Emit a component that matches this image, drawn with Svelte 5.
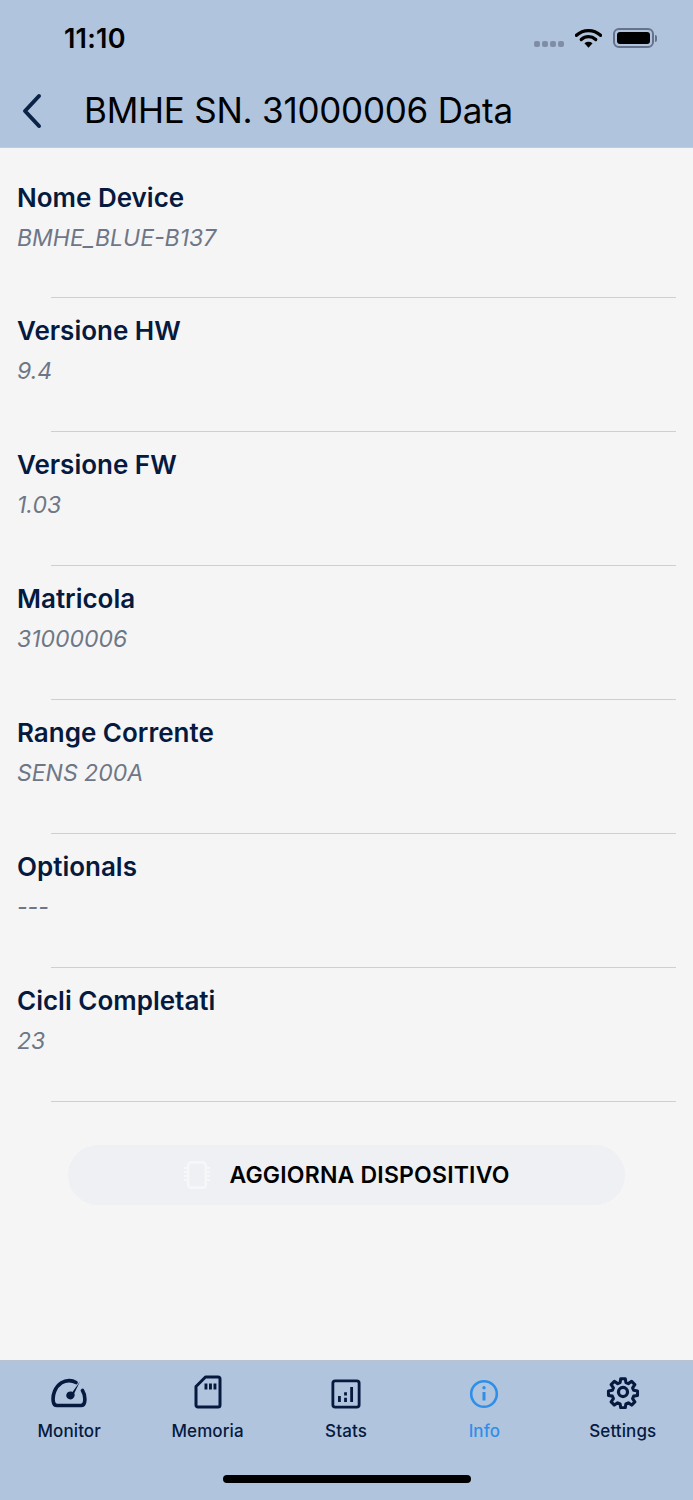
<script>
  const rows = [
    ['Nome Device', 'BMHE_BLUE-B137'],
    ['Versione HW', '9.4'],
    ['Versione FW', '1.03'],
    ['Matricola', '31000006'],
    ['Range Corrente', 'SENS 200A'],
    ['Optionals', '---'],
    ['Cicli Completati', '23']
  ];
</script>

<div class="page">
  <header>
    <div class="status">
      <span class="time">11:10</span>
      <div class="status-icons">
        <div class="dots"><i></i><i></i><i></i><i></i></div>
        <svg class="wifi" width="27" height="20" viewBox="0 0 28 20">
          <path d="M1.500 7.200C8.600 .6 19.400 .6 26.500 7.200" fill="none" stroke="#000" stroke-width="3.400" stroke-linecap="round"/>
          <path d="M6.500 11.600C10.900 7.700 17.100 7.700 21.500 11.600" fill="none" stroke="#000" stroke-width="3.400" stroke-linecap="round"/>
          <path d="M9.800 15.400C12.400 13.400 15.600 13.400 18.200 15.400L14 20Z" fill="#000"/>
        </svg>
        <div class="battery"><div class="fill"></div></div>
        <div class="nub"></div>
      </div>
    </div>
    <div class="nav">
      <svg class="back" width="24" height="36" viewBox="0 0 24 36">
        <path d="M19 3L5 18L19 33" fill="none" stroke="#0b2347" stroke-width="4" stroke-linecap="round" stroke-linejoin="round"/>
      </svg>
      <h1>BMHE SN. 31000006 Data</h1>
    </div>
  </header>

  <main>
    {#each rows as [label, value]}
      <section class="row">
        <div class="label">{label}</div>
        <div class="value">{value}</div>
      </section>
    {/each}
    <div class="action">
      <button>
        <svg width="28" height="30" viewBox="0 0 28 30" fill="none" stroke="#f6f7f9" stroke-width="2.400">
          <rect x="5.200" y="2.200" width="17.600" height="25.600" rx="3"/>
          <path d="M1 8h3M1 12h3M1 16h3M1 20h3M24 8h3M24 12h3M24 16h3M24 20h3" stroke-width="1.800"/>
        </svg>
        <span>AGGIORNA DISPOSITIVO</span>
      </button>
    </div>
  </main>

  <nav class="tabs">
    <div class="tab">
      <svg width="36" height="32" viewBox="0 0 36 32" fill="none" stroke="#051a3e" stroke-width="3.600" stroke-linecap="round" stroke-linejoin="round">
        <path d="M25 5.500C21 3 15 3 10.500 5.800C4 10 1.300 18 2.300 24.500C2.600 27 4 28.500 6 28.500H30C32 28.500 33.400 27 33.700 24.500C34.200 20.500 33.400 16.500 31.500 13.500"/>
        <path d="M29 4.500L21.500 15C18.800 13.600 15.200 15.300 15.200 18.600C15.200 21.800 19 23.500 21.700 21.700C24 20 24 17.500 23.300 16.300Z" fill="#051a3e" stroke="none"/>
      </svg>
      <span>Monitor</span>
    </div>
    <div class="tab">
      <svg width="28" height="34" viewBox="0 0 28 34" fill="none" stroke="#051a3e" stroke-width="3" stroke-linejoin="round">
        <path d="M11.500 2H24C25.300 2 26 2.700 26 4V30C26 31.300 25.300 32 24 32H4C2.700 32 2 31.300 2 30V11.500Z"/>
        <path d="M10.500 8.500H13.400V14.500H10.500ZM15 8.500H17.900V14.500H15ZM19.500 8.500H22.400V14.500H19.500Z" fill="#051a3e" stroke="none"/>
      </svg>
      <span>Memoria</span>
    </div>
    <div class="tab">
      <svg width="30" height="30" viewBox="0 0 32 32" fill="none" stroke="#051a3e" stroke-width="3" stroke-linejoin="round">
        <rect x="2" y="2" width="28" height="28" rx="2.500"/>
        <path d="M7.500 18H10.500V24.500H7.500ZM14 20H17V24.500H14ZM14 14H17V17.500H14ZM20.500 8.500H23.500V24.500H20.500Z" fill="#051a3e" stroke="none"/>
      </svg>
      <span>Stats</span>
    </div>
    <div class="tab active">
      <svg width="30" height="30" viewBox="0 0 30 30" fill="none" stroke="#2f8fe8" stroke-width="2.600">
        <circle cx="15" cy="15" r="12.800"/>
        <path d="M15 13V21.500" stroke-width="3"/>
        <circle cx="15" cy="8.800" r="1.700" fill="#2f8fe8" stroke="none"/>
      </svg>
      <span>Info</span>
    </div>
    <div class="tab">
      <svg width="34" height="34" viewBox="0 0 24 24" fill="none" stroke="#051a3e" stroke-width="2.300" stroke-linejoin="round">
        <circle cx="12" cy="12" r="3.200"/>
        <path d="M10.300 2h3.400l.5 2.900 1.800.8 2.500-1.700 2.400 2.400-1.700 2.500.8 1.800 2.900.5v3.400l-2.900.5-.8 1.800 1.700 2.500-2.400 2.400-2.500-1.700-1.800.8-.5 2.900h-3.400l-.5-2.900-1.800-.8-2.500 1.700-2.400-2.400 1.700-2.500-.8-1.800-2.900-.5v-3.400l2.900-.5.8-1.800-1.700-2.500 2.400-2.400 2.500 1.700 1.800-.8z" transform="translate(12 12) scale(.94) translate(-12 -12)"/>
      </svg>
      <span>Settings</span>
    </div>
    <div class="home"></div>
  </nav>
</div>

<style>
  :global(body) {
    margin: 0;
    background: #f5f5f5;
  }
  .page {
    width: 693px;
    height: 1500px;
    display: flex;
    flex-direction: column;
    font-family: Inter, "Liberation Sans", sans-serif;
    color: #051a3e;
    overflow: hidden;
  }
  header {
    height: 148px;
    flex: none;
    box-sizing: border-box;
    background: #b0c4de;
    border-bottom: 1px solid #c3cbd6;
  }
  .status {
    height: 76px;
    display: flex;
    justify-content: space-between;
    align-items: flex-start;
    padding: 0 36px 0 64px;
  }
  .time {
    margin-top: 23px;
    font-size: 27px;
    line-height: 32px;
    font-weight: 600;
    color: #000;
    letter-spacing: 0.2px;
  }
  .status-icons {
    display: flex;
    align-items: center;
    margin-top: 28px;
  }
  .dots {
    display: flex;
    gap: 2px;
    margin-right: 10px;
    margin-top: 12px;
  }
  .dots i {
    width: 6px;
    height: 6px;
    border-radius: 2px;
    background: #7f8ea5;
  }
  .wifi {
    margin-right: 11px;
    margin-left: 1px;
  }
  .battery {
    width: 41px;
    height: 20px;
    box-sizing: border-box;
    border: 2px solid #66718a;
    border-radius: 6px;
    padding: 2px;
  }
  .fill {
    height: 100%;
    background: #000;
    border-radius: 3px;
  }
  .nub {
    width: 2px;
    height: 7px;
    margin-left: 1px;
    background: #66718a;
    border-radius: 0 2px 2px 0;
  }
  .nav {
    height: 71px;
    display: flex;
    align-items: center;
  }
  .back {
    flex: none;
    margin-left: 20px;
    margin-top: -2px;
  }
  h1 {
    margin: -3px 0 0 40px;
    font-size: 35px;
    font-weight: 400;
    line-height: 44px;
    color: #000;
    letter-spacing: -0.24px;
  }
  main {
    flex: 1;
    background: #f5f5f5;
  }
  .row {
    height: 134px;
    box-sizing: border-box;
    padding: 17px 17px 0 17px;
    position: relative;
  }
  .row::after {
    content: "";
    position: absolute;
    left: 51px;
    right: 17px;
    bottom: 0;
    height: 1px;
    background: #cdcfd2;
  }
  .row:first-child {
    height: 150px;
    padding-top: 34px;
  }
  .label {
    font-size: 26px;
    line-height: 32px;
    font-weight: 600;
    color: #051a3e;
  }
  .value {
    margin-top: 8px;
    font-size: 23px;
    line-height: 32px;
    font-style: italic;
    color: #6e7787;
  }
  .action {
    display: flex;
    justify-content: center;
    padding-top: 43px;
  }
  button {
    width: 557px;
    height: 60px;
    border: 0;
    border-radius: 30px;
    background: #eef0f4;
    display: flex;
    align-items: center;
    justify-content: center;
    gap: 18px;
    font-family: inherit;
    padding: 0;
  }
  button span {
    font-size: 23px;
    font-weight: 600;
    color: #000;
    letter-spacing: 0.2px;
  }
  .tabs {
    height: 140px;
    flex: none;
    background: #b0c4de;
    border-top: 1px solid #b9c2d1;
    box-sizing: border-box;
    display: grid;
    grid-template-columns: repeat(5, 1fr);
    padding-right: 1px;
    position: relative;
  }
  .tab {
    display: flex;
    flex-direction: column;
    align-items: center;
    height: 81px;
    justify-content: flex-end;
    gap: 11px;
  }
  .tab span {
    font-size: 17px;
    line-height: 22px;
    font-weight: 500;
    color: #051a3e;
    letter-spacing: 0.1px;
  }
  .tab.active span {
    color: #2f8fe8;
  }
  .home {
    position: absolute;
    left: 223px;
    bottom: 17px;
    width: 248px;
    height: 8px;
    border-radius: 4px;
    background: #000;
  }
</style>
